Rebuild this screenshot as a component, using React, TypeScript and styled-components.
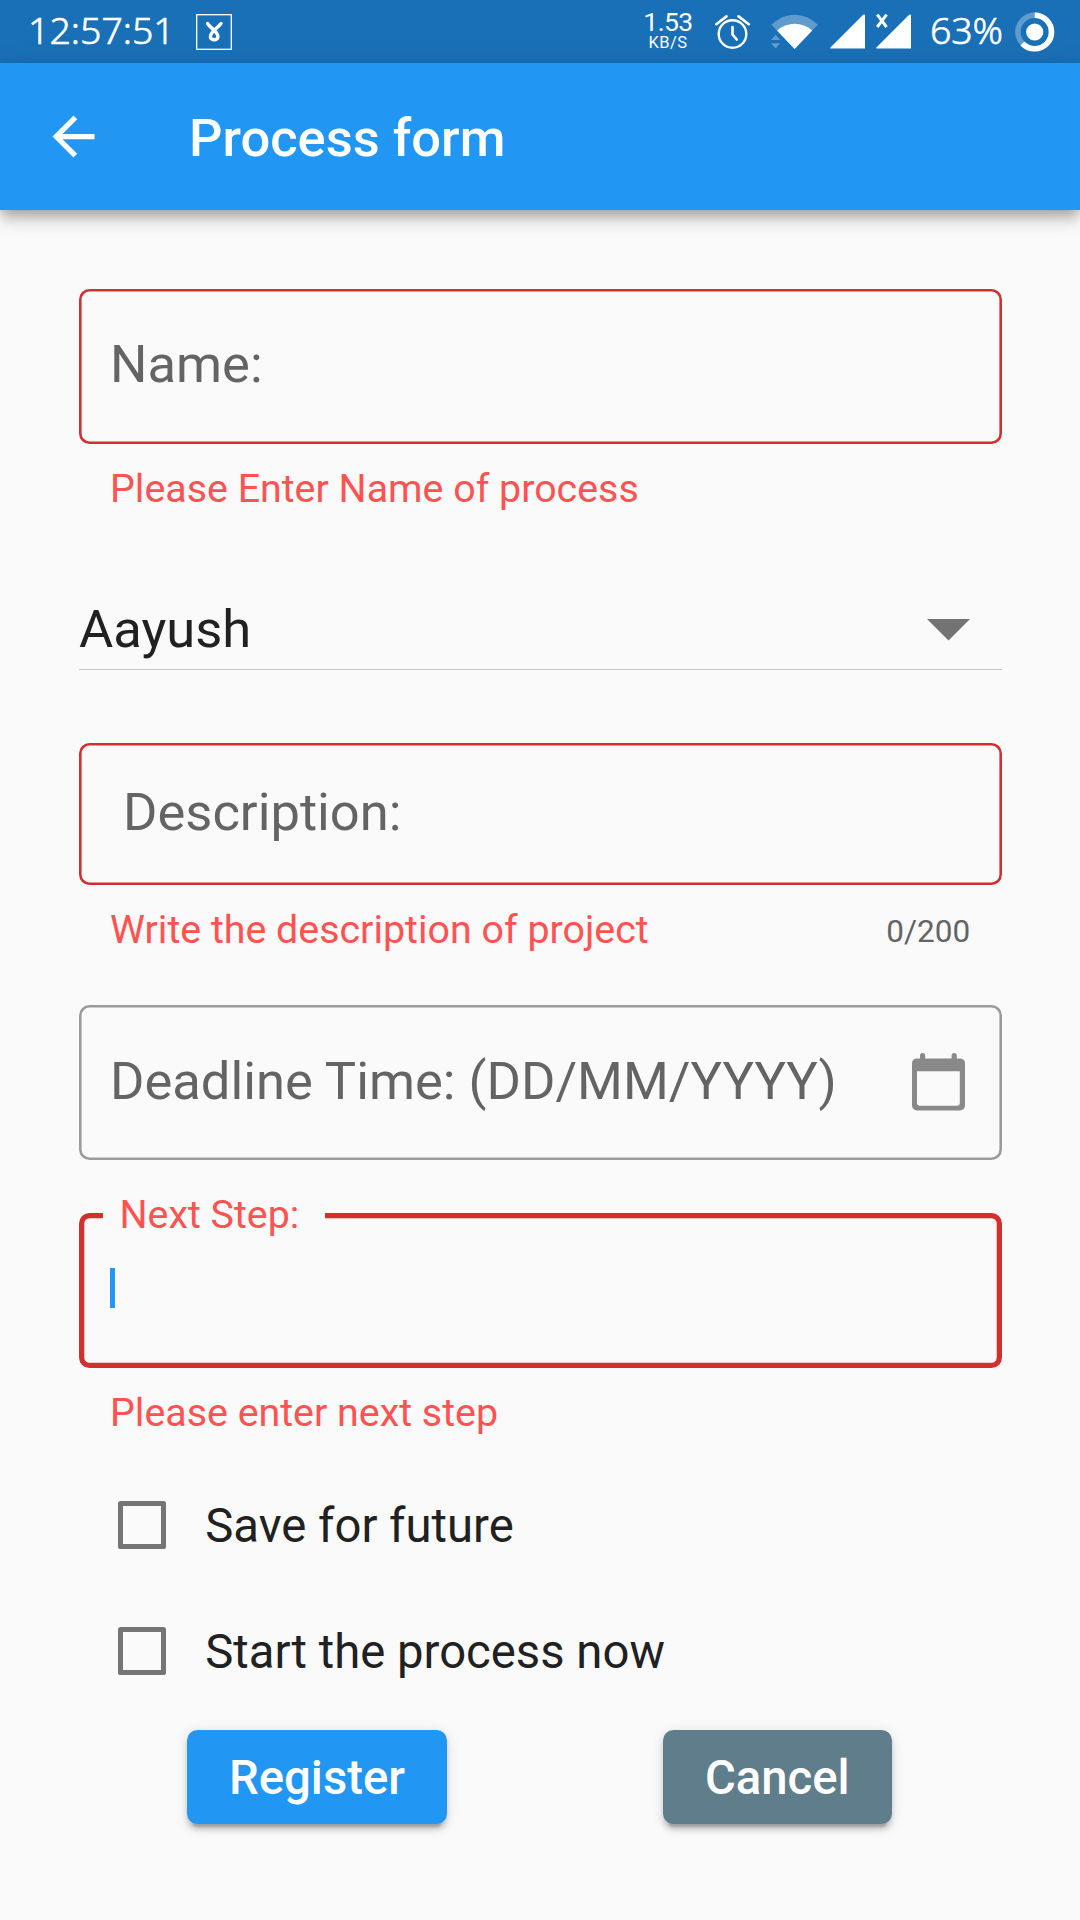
import React from "react";
import styled, { createGlobalStyle, css } from "styled-components";

const GlobalStyle = createGlobalStyle`
  *, *::before, *::after { box-sizing: border-box; }
  html, body { margin: 0; padding: 0; background: #fafafa; }
  body { font-family: Roboto, "Liberation Sans", sans-serif; }
`;

const color = {
  primary: "#2196f3",
  statusBar: "#1a70b7",
  page: "#fafafa",
  errorBorder: "#d32f2f",
  errorText: "#ff5252",
  border: "#9b9b9b",
  hint: "#646464",
  text: "#212121",
  box: "#757575",
};

const Screen = styled.div`
  width: 1080px;
  height: 1920px;
  overflow: hidden;
  display: flex;
  flex-direction: column;
  background: ${color.page};
`;

const StatusBar = styled.header`
  height: 63px;
  flex: none;
  display: flex;
  align-items: center;
  padding: 0 25.5px 0 28px;
  background: ${color.statusBar};
  color: #fff;
  svg { display: block; flex: none; }
`;

const StatusText = styled.span<{ $width: number; $spacing: number }>`
  width: ${(p) => p.$width}px;
  padding-bottom: 3px;
  font-family: "Noto Sans", "Open Sans", sans-serif;
  font-weight: 300;
  -webkit-text-stroke: 0.6px #fff;
  font-size: 37.5px;
  line-height: 50px;
  letter-spacing: ${(p) => p.$spacing}px;
  white-space: nowrap;
`;

const StatusIcons = styled.div`
  margin-left: auto;
  display: flex;
  align-items: center;
`;

const Speed = styled.div`
  width: 50px;
  margin: 0 22px 1px 0;
  display: flex;
  flex-direction: column;
  align-items: center;
  white-space: nowrap;
`;

const SpeedValue = styled.span`
  font-size: 26.5px;
  line-height: 24px;
  letter-spacing: -0.6px;
`;

const SpeedUnit = styled.span`
  font-size: 16.5px;
  line-height: 18px;
  letter-spacing: 0.4px;
`;

const Gap = styled.span<{ $w: number }>`
  width: ${(p) => p.$w}px;
  flex: none;
`;

const AppBar = styled.div`
  height: 147px;
  flex: none;
  display: flex;
  align-items: center;
  padding-left: 42px;
  background: ${color.primary};
  color: #fff;
  z-index: 1;
  box-shadow: 0 5.25px 10.5px -2.6px rgba(0, 0, 0, 0.2),
    0 10.5px 13px 0 rgba(0, 0, 0, 0.14), 0 2.6px 26px 0 rgba(0, 0, 0, 0.12);
`;

const BackButton = styled.button`
  width: 63px;
  height: 63px;
  margin-right: 84px;
  padding: 0;
  border: 0;
  background: none;
  color: inherit;
  svg { display: block; }
`;

const Title = styled.h1`
  margin: 0;
  padding-top: 2px;
  font-size: 52.5px;
  font-weight: 500;
  line-height: 62px;
`;

const Form = styled.form`
  flex: 1;
  display: flex;
  flex-direction: column;
  padding: 79px 78.4px 0 79px;
`;

const Outline = styled.div<{ $height: number; $tone?: "error" | "focus"; $indent?: number; $lift?: number }>`
  position: relative;
  height: ${(p) => p.$height}px;
  flex: none;
  display: flex;
  align-items: center;
  justify-content: space-between;
  padding: 0 36.5px ${(p) => p.$lift ?? 4}px ${(p) => 31 + (p.$indent ?? 0)}px;
  border-radius: 10.5px;
  svg { margin-top: 2px; }
  ${(p) =>
    p.$tone === "focus"
      ? css`box-shadow: inset 0 0 0 5.25px ${color.errorBorder};`
      : css`box-shadow: inset 0 0 0 2.6px ${p.$tone === "error" ? color.errorBorder : color.border};`}
`;

const Label = styled.label`
  font-size: 52.5px;
  line-height: 62px;
  color: ${color.hint};
  white-space: nowrap;
`;

const FloatingLabel = styled.label`
  position: absolute;
  top: -21px;
  left: 24px;
  width: 221.5px;
  padding-left: 16.5px;
  font-size: 39.375px;
  line-height: 46px;
  color: ${color.errorText};
  background: ${color.page};
  white-space: nowrap;
`;

const Caret = styled.span`
  width: 5.25px;
  height: 39.5px;
  background: ${color.primary};
`;

const Helper = styled.div`
  flex: none;
  display: flex;
  align-items: center;
  justify-content: space-between;
  height: 46px;
  margin-top: 22px;
  padding: 0 31.5px 0 31px;
`;

const ErrorText = styled.span`
  font-size: 39.375px;
  line-height: 46px;
  color: ${color.errorText};
`;

const Counter = styled.span`
  padding-top: 3px;
  font-size: 31.5px;
  line-height: 37px;
  color: ${color.hint};
`;

const Select = styled.div`
  flex: none;
  display: flex;
  align-items: center;
  justify-content: space-between;
  height: 80px;
  margin: 78px 0 73px;
  padding: 0 31.3px 0 0;
  border-bottom: 1px solid #c6c6c6;
  font-size: 52.5px;
  line-height: 62px;
  color: ${color.text};
`;

const SelectValue = styled.span`
  padding-bottom: 2px;
`;

const Spacer = styled.div<{ $h: number }>`
  height: ${(p) => p.$h}px;
  flex: none;
`;

const CheckRow = styled.label`
  height: 126px;
  flex: none;
  display: flex;
  align-items: center;
  padding-left: 39.3px;
  gap: 39.7px;
  font-size: 47.25px;
  line-height: 56px;
  color: ${color.text};
`;

const CheckText = styled.span`
  padding-top: 2px;
`;

const CheckBox = styled.span`
  width: 47.25px;
  height: 47.25px;
  border: 5px solid ${color.box};
  border-radius: 2.6px;
`;

const Actions = styled.div`
  flex: none;
  display: flex;
  justify-content: space-around;
  margin-top: 16px;
  padding-right: 2px;
`;

const Button = styled.button<{ $bg: string }>`
  height: 94.5px;
  padding: 2px 42.4px 0;
  border: 0;
  border-radius: 10.5px;
  background: ${(p) => p.$bg};
  color: #fff;
  font-family: inherit;
  font-size: 47.25px;
  font-weight: 500;
  line-height: 56px;
  box-shadow: 0 7.9px 2.6px -5.25px rgba(0, 0, 0, 0.2),
    0 5.25px 5.25px 0 rgba(0, 0, 0, 0.14), 0 2.6px 13px 0 rgba(0, 0, 0, 0.12);
`;

const NotificationIcon = () => (
  <svg width="36" height="36" viewBox="0 0 36 36" fill="none" stroke="#fff">
    <rect x="0.7" y="0.7" width="34.6" height="34.6" strokeWidth="1.3" />
    <path
      d="M11.6 9.6C14 13.8 22 17.8 22 22.4C22 26.8 14.4 26.8 14.4 22.4C14.4 18.4 20 15.4 25 9.6"
      strokeWidth="3.4"
      strokeLinecap="round"
    />
  </svg>
);

const AlarmIcon = () => (
  <svg width="36" height="36" viewBox="0 0 36 36" fill="none" stroke="#fff" strokeLinecap="round">
    <circle cx="17.5" cy="20" r="13.8" strokeWidth="2.4" />
    <path d="M17.5 13V20.5L21.8 25.5" strokeWidth="2.6" />
    <path d="M1.3 10.2L11.5 2.4M33.8 10.2L23.5 2.4" strokeWidth="2.6" />
  </svg>
);

const WifiIcon = () => (
  <svg width="48" height="36" viewBox="0 0 48 36">
    <path d="M0.5 10.8C14 -2.6 33.3 -2.6 46.8 10.8L23.6 35Z" fill="#fff" opacity="0.3" />
    <path d="M6 16.4C16.5 7.4 31 7.4 41.2 16.4L23.6 35Z" fill="#fff" />
    <path d="M0 26L4.6 20.8L9.2 26ZM0 29.2H9.2L4.6 34.4Z" fill="#fff" opacity="0.3" />
  </svg>
);

const SignalIcon = ({ noService = false }: { noService?: boolean }) => (
  <svg width="36" height="36" viewBox="0 0 36 36">
    <path d="M0.4 33.4L33.1 0.8Q35 -0.3 35 1.6V34.6H1.2Q-0.3 34.6 0.4 33.4Z" fill="#fff" />
    {noService && <path d="M1.2 0.6L10.6 13M10.6 0.6L1.2 13" stroke="#fff" strokeWidth="2.9" />}
  </svg>
);

const BatteryIcon = () => (
  <svg width="40" height="40" viewBox="0 0 40 40" fill="none">
    <circle cx="19.7" cy="20" r="16.8" stroke="#fff" strokeWidth="5.6" opacity="0.3" />
    <circle
      cx="19.7" cy="20" r="16.8" stroke="#fff" strokeWidth="5.6"
      pathLength={100} strokeDasharray="63 37" transform="rotate(-90 19.7 20)"
    />
    <circle cx="19.7" cy="20" r="8.6" fill="#fff" />
  </svg>
);

const CalendarIcon = () => (
  <svg width="53" height="58" viewBox="0 0 53 58" fill="#898989">
    <path
      fillRule="evenodd"
      d="M5 5.4H8V2.6a2.6 2.6 0 0 1 5.2 0V5.4H39.6V2.6a2.6 2.6 0 0 1 5.2 0V5.4H48a5 5 0 0 1 5 5V52.5a5 5 0 0 1-5 5H5a5 5 0 0 1-5-5V10.4a5 5 0 0 1 5-5ZM5 18.3V50.3a2.4 2.4 0 0 0 2.4 2.4H45.4a2.4 2.4 0 0 0 2.4-2.4V18.3Z"
    />
  </svg>
);

export default function App() {
  return (
    <>
      <GlobalStyle />
      <Screen>
        <StatusBar>
          <StatusText $width={168} $spacing={0}>12:57:51</StatusText>
          <NotificationIcon />
          <StatusIcons>
            <Speed>
              <SpeedValue>1.53</SpeedValue>
              <SpeedUnit>KB/S</SpeedUnit>
            </Speed>
            <AlarmIcon />
            <Gap $w={20} />
            <WifiIcon />
            <Gap $w={11} />
            <SignalIcon />
            <Gap $w={10} />
            <SignalIcon noService />
            <Gap $w={18} />
            <StatusText $width={84.5} $spacing={-0.2}>63%</StatusText>
            <BatteryIcon />
          </StatusIcons>
        </StatusBar>
        <AppBar>
          <BackButton type="button" aria-label="Back">
            <svg width="63" height="63" viewBox="0 0 24 24" fill="currentColor">
              <path d="M20 11H7.83l5.59-5.59L12 4l-8 8 8 8 1.41-1.41L7.83 13H20v-2z" />
            </svg>
          </BackButton>
          <Title>Process form</Title>
        </AppBar>
        <Form>
          <Outline $height={155} $tone="error" $lift={6}>
            <Label>Name:</Label>
          </Outline>
          <Helper>
            <ErrorText>Please Enter Name of process</ErrorText>
          </Helper>
          <Select>
            <SelectValue>Aayush</SelectValue>
            <svg width="43" height="22" viewBox="0 0 43 22" fill="#737373">
              <path d="M0 0H43L21.5 21.5Z" />
            </svg>
          </Select>
          <Outline $height={142} $tone="error" $indent={13}>
            <Label>Description:</Label>
          </Outline>
          <Helper>
            <ErrorText>Write the description of project</ErrorText>
            <Counter>0/200</Counter>
          </Helper>
          <Spacer $h={52} />
          <Outline $height={155} $lift={3}>
            <Label>Deadline Time: (DD/MM/YYYY)</Label>
            <CalendarIcon />
          </Outline>
          <Spacer $h={53} />
          <Outline $height={155.4} $tone="focus" $lift={5}>
            <FloatingLabel>Next Step:</FloatingLabel>
            <Caret />
          </Outline>
          <Helper>
            <ErrorText>Please enter next step</ErrorText>
          </Helper>
          <Spacer $h={25.6} />
          <CheckRow>
            <CheckBox />
            <CheckText>Save for future</CheckText>
          </CheckRow>
          <CheckRow>
            <CheckBox />
            <CheckText>Start the process now</CheckText>
          </CheckRow>
          <Actions>
            <Button type="button" $bg={color.primary}>Register</Button>
            <Button type="button" $bg="#607d8b">Cancel</Button>
          </Actions>
        </Form>
      </Screen>
    </>
  );
}
